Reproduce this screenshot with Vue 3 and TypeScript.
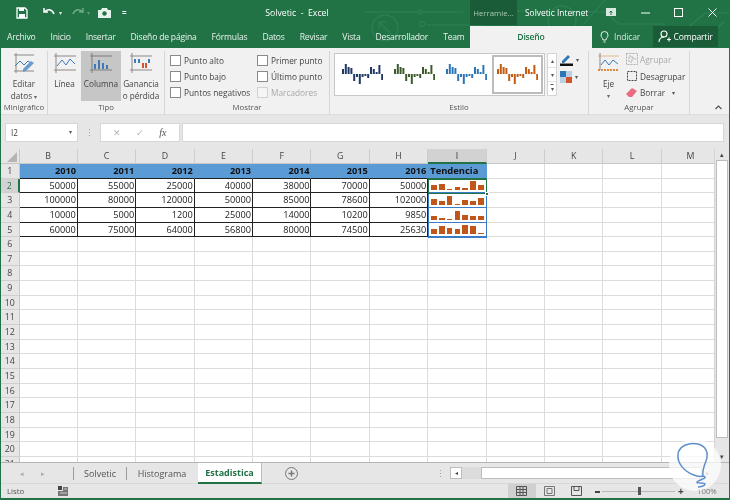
<script setup lang="ts">
const cols = ['B','C','D','E','F','G','H','I','J','K','L','M']
const years = [2010,2011,2012,2013,2014,2015,2016]
const data = [
  [50000,55000,25000,40000,38000,70000,50000],
  [100000,80000,120000,50000,85000,78600,102000],
  [10000,5000,1200,25000,14000,10200,9850],
  [60000,75000,64000,56800,80000,74500,25630],
]
const rows = Array.from({length:21},(_,i)=>i+1)
function bars(r:number[]){
  const mn=Math.min(...r), mx=Math.max(...r)
  return r.map(v=>Math.max(1,(v-mn)/(mx-mn)*9))
}
const pattern=[5,10,7,6,-7,-3,-10,-3,-2,-4,7,5,2,9,-6]
const styles=['#1f3864','#3f5a2b','#2e75b6','#c55a11']
</script>

<template>
  <div class="app">
    <div class="top">
      <svg class="circuit" width="365" height="48" viewBox="0 0 365 48" fill="none" stroke="#2e8057" stroke-width="1.100">
        <path d="M0 12H52M55 12h4M58 12h40M62 25H120M120 25l14-14h24M172 12h12M210 12h30l14 12H300M300 47l40-34h25M330 47l30-26M240 0l-22 25"/>
        <circle cx="20" cy="28" r="13"/><circle cx="197" cy="20" r="14"/><circle cx="57" cy="24" r="2.500"/><circle cx="55" cy="12" r="2"/>
        <path d="M26 34 14 22M14 29v-7h7"/>
      </svg>
      <header class="title">
        <div class="qat">
          <svg width="12" height="12" viewBox="0 0 12 12"><path d="M1 1h8l2 2v8H1z" fill="none" stroke="#fff" stroke-width="1.300"/><path d="M3 1h5v3H3zM3 7h6v4H3z" fill="#fff"/></svg>
          <svg width="13" height="11" viewBox="0 0 13 11" fill="none" stroke="#fff" stroke-width="1.500"><path d="M1 1v4h4M1.500 5C4 1.500 9 2 11 7"/></svg>
          <span class="tiny">▾</span>
          <svg class="dim" width="13" height="11" viewBox="0 0 13 11" fill="none" stroke="#6fa988" stroke-width="1.500"><path d="M12 1v4H8M11.500 5C9 1.500 4 2 2 7"/></svg>
          <span class="tiny dimt">▾</span>
          <svg class="cam" width="13" height="10" viewBox="0 0 13 10"><path d="M0 2h3l1-2h5l1 2h3v8H0z" fill="#e8f2ec"/><circle cx="6.500" cy="5.500" r="2.200" fill="#217346"/></svg>
          <span class="custom">=</span>
        </div>
        <div class="doc">Solvetic&nbsp; -&nbsp; Excel</div>
        <div class="tool">Herramie...</div>
        <div class="user">Solvetic Internet</div>
        <div class="winbtns">
          <svg width="10" height="9" viewBox="0 0 10 9"><path d="M0 0h10v8H0z" fill="#d9e8df"/><path d="M5 7V3M3.500 4.500 5 3l1.500 1.500" stroke="#217346" fill="none"/></svg>
          <svg width="9" height="9" viewBox="0 0 9 9"><path d="M0 5h9" stroke="#fff"/></svg>
          <svg width="9" height="9" viewBox="0 0 9 9"><rect x=".5" y=".5" width="8" height="8" fill="none" stroke="#fff"/></svg>
          <svg width="9" height="9" viewBox="0 0 9 9"><path d="m.5.500 8 8m0-8-8 8" stroke="#fff"/></svg>
        </div>
      </header>

      <nav class="tabs">
        <span>Archivo</span><span>Inicio</span><span>Insertar</span><span>Diseño de página</span><span>Fórmulas</span><span>Datos</span><span>Revisar</span><span>Vista</span><span>Desarrollador</span><span>Team</span>
        <b class="active">Diseño</b>
        <span class="tell">
          <svg width="9" height="12" viewBox="0 0 9 12" fill="none" stroke="#e6f0ea"><path d="M3 9C3 7 1 6.500 1 4a3.500 3.500 0 0 1 7 0c0 2.500-2 3-2 5zM3.500 11h2"/></svg>
          Indicar
        </span>
        <span class="share">
          <svg width="13" height="13" viewBox="0 0 13 13" fill="none" stroke="#fff" stroke-width="1.100"><circle cx="6" cy="4" r="3"/><path d="M1 12c0-3 2-5 5-5M9 9.500h4M11 7.500v4"/></svg>
          Compartir
        </span>
      </nav>
    </div>

    <section class="ribbon">
      <div class="group g1">
        <div class="body big">
          <div class="bigbtn">
            <svg width="24" height="22" viewBox="0 0 24 22" fill="none"><path d="M2 2h20M2 18h20M4 0v20" stroke="#8a8a8a"/><path d="m3 13 5-5 4 4 4-4 4 3" stroke="#3d7ab8"/><path d="m11 16 8-8 3 2-8 8-3 1z" fill="#6a9bcc"/></svg>
            <span>Editar<br>datos <i>▾</i></span>
          </div>
        </div>
        <label>Minigráfico</label>
      </div>
      <div class="group g2">
        <div class="body big">
          <div class="bigbtn w1">
            <svg width="22" height="22" viewBox="0 0 22 22" fill="none"><path d="M0 3h22M0 17h22M2 0v20" stroke="#8a8a8a"/><path d="m3 13 5-6 4 5 4-6 5 5" stroke="#3d7ab8"/></svg>
            <span>Línea</span>
          </div>
          <div class="bigbtn w2 on">
            <svg width="22" height="22" viewBox="0 0 22 22" fill="none"><path d="M0 3h22M0 17h22M2 0v20" stroke="#7d7d7d"/><path d="M4 11h2v5H4zM8 7h2v9H8zM12 10h2v6h-2zM16 12h2v4h-2z" fill="#3d7ab8"/></svg>
            <span>Columna</span>
          </div>
          <div class="bigbtn w3">
            <svg width="22" height="22" viewBox="0 0 22 22" fill="none"><path d="M0 3h22M0 17h22M2 0v20" stroke="#8a8a8a"/><path d="M4 6h2v4H4zM8 6h2v4H8zM18 6h2v4h-2z" fill="#3d7ab8"/><path d="M12 10h2v5h-2zM15 10h2v5h-2z" fill="#d0552a"/></svg>
            <span>Ganancia<br>o pérdida</span>
          </div>
        </div>
        <label>Tipo</label>
      </div>
      <div class="group g3">
        <div class="body checks">
          <div class="checkcol c1">
            <div class="chk"><i></i>Punto alto</div>
            <div class="chk"><i></i>Punto bajo</div>
            <div class="chk"><i></i>Puntos negativos</div>
          </div>
          <div class="checkcol">
            <div class="chk"><i></i>Primer punto</div>
            <div class="chk"><i></i>Último punto</div>
            <div class="chk off"><i></i>Marcadores</div>
          </div>
        </div>
        <label>Mostrar</label>
      </div>
      <div class="group g4">
        <div class="body gal">
          <div class="gallery">
            <div v-for="(c,i) in styles" :key="c" class="item" :class="{sel:i===3}">
              <svg width="41" height="24" viewBox="0 0 41 24">
                <rect v-for="(p,j) in pattern" :key="j" :x="j*2.800" :y="p>0?11-p:11" width="2" :height="Math.abs(p)" :fill="c"/>
              </svg>
            </div>
          </div>
          <div class="spin"><span>▴</span><span>▾</span><span class="more">▾</span></div>
          <div class="pickers">
            <div class="pick">
              <svg width="13" height="13" viewBox="0 0 13 13"><path d="m2 8 6-6 2 2-6 6H2z" fill="#2e75b6"/><path d="M0 10.500h13V13H0z" fill="#111"/></svg><em>▾</em>
            </div>
            <div class="pick">
              <svg width="12" height="12" viewBox="0 0 12 12"><path d="M0 0h6v6H0z" fill="#2e75b6"/><path d="M6 6h6v6H6z" fill="#d0552a"/><path d="M6 0h6v6H6zM0 6h6v6H0z" fill="#b9cfe4"/></svg><em>▾</em>
            </div>
          </div>
        </div>
        <label>Estilo</label>
      </div>
      <div class="group g5">
        <div class="body axis">
          <div class="bigbtn eje">
            <svg width="23" height="22" viewBox="0 0 23 22" fill="none"><path d="M1 3h21" stroke="#e3b98e"/><path d="M1 17h21" stroke="#e08a3c" stroke-dasharray="2 1" stroke-width="2"/><path d="M3 0v17" stroke="#8a8a8a"/><path d="m4 12 4-5 4 5 4-5 5 4" stroke="#3d7ab8"/></svg>
            <span>Eje<br><i>▾</i></span>
          </div>
          <div class="acts">
            <div class="act off"><svg width="12" height="12" viewBox="0 0 12 12" fill="none" stroke="#b0b0b0" stroke-dasharray="2 1"><rect x=".5" y=".5" width="11" height="11"/><path d="M3 3h3v6H3zM6 5h3v3"/></svg>Agrupar</div>
            <div class="act"><svg width="12" height="12" viewBox="0 0 12 12" fill="none" stroke="#444" stroke-dasharray="2 1"><rect x="1.500" y="1.500" width="9" height="9"/></svg>Desagrupar</div>
            <div class="act"><svg width="12" height="11" viewBox="0 0 12 11"><path d="m0 7 6-6 5 3-5 6H3z" fill="#ea6b82"/></svg>Borrar <em>▾</em></div>
          </div>
        </div>
        <label>Agrupar</label>
      </div>
      <div class="collapse">
        <svg width="7" height="5" viewBox="0 0 7 5" fill="none" stroke="#555" stroke-width="1.200"><path d="m.5 4 3-3 3 3"/></svg>
      </div>
    </section>

    <section class="formula">
      <div class="namebox">I2<em>▾</em></div>
      <div class="dots">⋮</div>
      <div class="fxbox"><span>✕</span><span>✓</span><i>fx</i></div>
      <div class="input"></div>
    </section>

    <section class="sheet">
      <div class="gridwrap">
        <div class="grid">
          <div class="corner"><svg width="10" height="10" viewBox="0 0 10 10"><path d="M10 0v10H0z" fill="#b5b5b5"/></svg></div>
          <div v-for="c in cols" :key="c" class="colh" :class="{cur:c==='I'}">{{ c }}</div>
          <template v-for="r in rows" :key="r">
            <div class="rowh" :class="{cur:r===2}">{{ r }}</div>
            <template v-for="(c,ci) in cols" :key="c">
              <div v-if="r===1 && ci<7" class="cell hd">{{ years[ci] }}</div>
              <div v-else-if="r===1 && ci===7" class="cell hd tend">Tendencia</div>
              <div v-else-if="r>=2 && r<=5 && ci<7" class="cell num" :class="{left:ci===0}">{{ data[r-2][ci] }}</div>
              <div v-else-if="r>=2 && r<=5 && ci===7" class="cell spark">
                <span v-for="(h,k) in bars(data[r-2])" :key="k" :style="{height:h+'px'}"></span>
              </div>
              <div v-else class="cell"></div>
            </template>
          </template>
          <div class="selblue"></div>
          <div class="selgreen"></div>
        </div>
      </div>
      <div class="vscroll">
        <span class="arrow">▴</span>
        <div class="thumb"></div>
        <span class="arrow">▾</span>
      </div>
    </section>

    <section class="sheettabs">
      <span class="nav">◂</span><span class="nav n2">▸</span>
      <span class="sep s0"></span><span class="st">Solvetic</span><span class="sep"></span><span class="st">Histograma</span>
      <b class="cur">Estadistica</b>
      <svg class="add" width="13" height="13" viewBox="0 0 13 13" fill="none" stroke="#777"><circle cx="6.500" cy="6.500" r="6"/><path d="M3.500 6.500h6M6.500 3.500v6" stroke-width="1.400"/></svg>
      <span class="grip">⋮</span>
      <div class="hscroll">
        <span class="hbtn">◂</span><span class="htrack"></span><span class="hthumb"></span><span class="hend">▸</span>
      </div>
    </section>

    <footer class="status">
      <span class="ready">Listo</span>
      <svg class="macro" width="10" height="10" viewBox="0 0 10 10"><path d="M0 0h4v4H0z" fill="#444"/><path d="M5 1h5v9H0V5h5z" fill="#777"/><path d="M6 3h3M2 7h7" stroke="#eee" stroke-width=".7"/></svg>
      <div class="views">
        <span class="v on"><svg width="11" height="10" viewBox="0 0 11 10" fill="none" stroke="#555"><path d="M.5.500h10v9H.500zM.5 3.500h10M.5 6.500h10M4 .5v9M7 .5v9"/></svg></span>
        <span class="v"><svg width="11" height="10" viewBox="0 0 11 10" fill="none" stroke="#777"><path d="M.5.500h10v9H.500zM3 2.500h5v5H3z"/></svg></span>
        <span class="v"><svg width="11" height="10" viewBox="0 0 11 10" fill="none" stroke="#555"><path d="M.5.500h10v9H.500zM3 .5v4h5v-4"/></svg></span>
      </div>
      <span class="minus"></span>
      <div class="slider"><i></i></div>
      <span class="plus">+</span>
      <span class="pct">100%</span>
    </footer>

    <div class="badge">
      <svg width="54" height="54" viewBox="0 0 54 54" fill="none">
        <circle cx="27" cy="27" r="26" fill="#fff" fill-opacity=".72"/>
        <path d="M26 37C17 34 9 26 10 16 11 8 21 4 30 6c8 2 11 9 8 17-2 5-4 10-3 15M26 37c5 3 10 0 11 2s-7 3-8 5 8 0 8 2-5 3-7 3" stroke="#5f8fc9" stroke-width="1.500"/>
      </svg>
    </div>
  </div>
</template>

<style>
html,body{margin:0;padding:0;background:#fff}
</style>

<style scoped>
.app{width:730px;height:500px;box-sizing:border-box;position:relative;overflow:hidden;background:#e6e6e6;font-family:"Open Sans","Liberation Sans",sans-serif;color:#444;display:flex;flex-direction:column;border:solid #217346;border-width:0 1px 2px 1px;filter:blur(.3px)}
.top{margin:0 -1px;background:#217346;position:relative;flex:none}
.title{height:25px;display:flex;align-items:center;color:#fff;position:relative;font-size:8.500px}
.circuit{position:absolute;left:365px;top:0;pointer-events:none}
.qat{display:flex;align-items:center;margin-left:16px;width:215px;flex:none}
.qat svg{flex:none}
.qat>svg:nth-child(2){margin-left:15px}
.tiny{font-size:6px;margin-left:3px;color:#d5e6dc}
.dimt{color:#5f9c7a}
.dim{margin-left:9px}
.cam{margin-left:8px}
.custom{margin-left:11px;font-size:8px;font-weight:700}
.doc{width:132px;font-size:8.700px;text-align:center;flex:none}
.tool{position:absolute;left:470px;top:0;width:47px;height:25px;background:#1a5c38;color:#a9c9b6;display:flex;align-items:center;justify-content:center;font-size:7.800px}
.user{position:absolute;left:525px;top:0;line-height:25px;font-size:8.400px}
.winbtns{position:absolute;left:606px;top:0;height:25px;width:111px;display:flex;align-items:center;justify-content:space-between}
.tabs{height:23px;display:flex;align-items:center;color:#e8f2ec;font-size:8.600px;letter-spacing:-.2px;padding-left:7px;position:relative;box-sizing:border-box}
.tabs>span{margin-right:15px;white-space:nowrap}
.tabs .active{position:absolute;left:470px;top:1px;width:122px;height:22px;background:#f1f1f1;color:#217346;display:flex;align-items:center;justify-content:center;font-weight:600;margin:0}
.tell{position:absolute;left:600px;top:0;height:23px;display:flex;align-items:center;gap:5px;color:#cfe2d6}
.share{position:absolute;left:653px;top:1px;width:65px;height:21px;background:#1a5c38;display:flex;align-items:center;justify-content:center;gap:2px;color:#fff;margin:0!important}
.ribbon{height:67px;margin:0 -1px;padding-left:1px;background:#f1f1f1;display:flex;position:relative;flex:none;border-bottom:1px solid #dcdcdc;box-sizing:border-box}
.group{display:flex;flex-direction:column;box-sizing:border-box;border-right:1px solid #d6d6d6;margin:3px 0 0;flex:none}
.group label{height:13px;line-height:12px;text-align:center;font-size:7.800px;color:#555;flex:none}
.body{flex:1;display:flex;min-height:0}
.g1{width:47px}.g2{width:117px}.g3{width:165px}.g4{width:259px}.g5{width:101px}
.bigbtn{display:flex;flex-direction:column;align-items:center;font-size:8.200px;line-height:11.500px;color:#444;text-align:center;padding-top:2px;box-sizing:border-box}
.bigbtn svg{margin-bottom:3px;flex:none}
.bigbtn i{font-style:normal;font-size:6px;color:#666}
.g1 .bigbtn{width:100%}
.w1{width:33px}.w2{width:40px}.w3{width:40px}
.on{background:#c6c6c6}
.checks{padding:1px 0 0 5px;gap:0}
.checkcol{display:flex;flex-direction:column;gap:0}
.c1{width:87px}
.chk{display:flex;align-items:center;font-size:8.300px;color:#444;height:17px;white-space:nowrap}
.chk i{width:9px;height:9px;border:1px solid #8a8a8a;background:#fff;margin-right:3px;flex:none}
.off{color:#a8a8a8}
.chk.off i{border-color:#d2d2d2;background:#f5f5f5}
.gal{padding:2px 0 0 4px;align-items:flex-start}
.gallery{width:211px;height:43px;border:1px solid #c8c8c8;box-sizing:border-box;background:#fff;display:flex;padding:1px}
.item{flex:1;display:flex;align-items:center;justify-content:center}
.item.sel{flex:none;width:51px;border:2px solid #bcbcbc;box-sizing:border-box}
.spin{width:10px;height:43px;margin-left:2px;display:flex;flex-direction:column;border:1px solid #d4d4d4;box-sizing:border-box;background:#fff}
.spin span{flex:1;display:flex;align-items:center;justify-content:center;font-size:6px;line-height:1;color:#555;border-bottom:1px solid #e2e2e2}
.spin .more{border:0;text-decoration:overline}
.pickers{margin-left:3px;display:flex;flex-direction:column;gap:4px}
.pick{display:flex;align-items:center;gap:3px;height:13px}
.pick em,.act em,.namebox em{font-style:normal;font-size:6px;color:#555}
.axis{padding-left:5px}
.eje{width:29px}
.eje svg{margin-bottom:3px}
.eje span{line-height:11px}
.acts{display:flex;flex-direction:column;margin-left:3px}
.act{display:flex;align-items:center;gap:2px;height:17px;font-size:8.300px;white-space:nowrap}
.act em{margin-left:5px}
.collapse{position:absolute;left:715px;top:56px;line-height:0}
.formula{height:34px;background:#e6e6e6;display:flex;align-items:center;padding:1px 0 1px 4px;flex:none;box-sizing:border-box}
.namebox{width:73px;height:19px;box-sizing:border-box;background:#fff;border:1px solid #d6d6d6;font-size:8.200px;display:flex;align-items:center;justify-content:space-between;padding:0 5px;color:#444}
.dots{width:22px;text-align:center;font-size:9px;color:#a0a0a0}
.fxbox{width:80px;height:19px;box-sizing:border-box;background:#fff;border:1px solid #d6d6d6;display:flex;align-items:center;justify-content:space-around;font-size:9px;color:#b5b5b5;padding:0 5px}
.fxbox i{color:#555;font-family:"Liberation Serif",serif;font-size:10px}
.input{width:542px;height:19px;margin-left:2px;box-sizing:border-box;background:#fff;border:1px solid #d6d6d6}
.sheet{height:314px;display:flex;flex:none;background:#fff;overflow:hidden;border-bottom:1px solid #b5b5b5;box-sizing:border-box}
.gridwrap{width:713px;overflow:hidden;flex:none}
.grid{display:grid;grid-template-columns:18.500px repeat(12,58.400px);grid-auto-rows:14.650px;grid-template-rows:15px;position:relative;width:720px;font-size:9.200px;color:#222}
.corner{background:#e6e6e6;display:flex;align-items:flex-end;justify-content:flex-end;padding:0 2px 1px 0;border-right:1px solid #c8c8c8;border-bottom:1px solid #c8c8c8;box-sizing:border-box}
.colh{background:#e6e6e6;border-right:1px solid #cdcdcd;border-bottom:1px solid #c8c8c8;box-sizing:border-box;text-align:center;line-height:15px;font-size:8.800px;color:#444}
.colh.cur{background:#d2d2d2;border-bottom:2px solid #217346;color:#333}
.rowh{background:#e6e6e6;border-right:1px solid #c8c8c8;border-bottom:1px solid #cfcfcf;box-sizing:border-box;text-align:center;line-height:14px;font-size:8.800px;color:#444}
.rowh.cur{background:#d2d2d2;color:#217346;border-right:2px solid #217346}
.cell{border-right:1px solid #e0dbdb;border-bottom:1px solid #e0dbdb;box-sizing:border-box;min-width:0;line-height:13.600px;white-space:nowrap}
.hd{background:#5b9bd5;font-weight:700;text-align:right;padding-right:1px;border-color:#5b9bd5;color:#111;border-bottom:1px solid #222}
.tend{text-align:left;padding-left:2px;font-size:9.400px;border-bottom-color:#217346}
.num{text-align:right;padding-right:1px;border-right:1px solid #222;border-bottom:1px solid #222;color:#222}
.spark{display:flex;align-items:flex-end;justify-content:space-between;padding:0 2px 2px 3px;border-color:#3a7cc9}
.spark span{width:5.500px;background:#c0561a;display:block}
.selblue{position:absolute;left:427.300px;top:29.650px;width:59px;height:59px;border:1px solid #3a7cc9;box-sizing:border-box;pointer-events:none}
.selgreen{position:absolute;left:427.300px;top:29.650px;width:59px;height:15px;border:1.500px solid #217346;box-sizing:border-box;pointer-events:none}
.selgreen::after{content:"";position:absolute;right:-3px;bottom:-3px;width:4px;height:4px;background:#217346;border:1px solid #fff;box-sizing:border-box}
.vscroll{flex:1;display:flex;flex-direction:column;background:#e6e6e6;align-items:center;padding:0 1px;border-left:1px solid #d4d4d4;box-sizing:border-box}
.arrow{height:11px;font-size:7px;line-height:11px;color:#444;flex:none}
.thumb{width:12px;height:278px;background:#fff;border:1px solid #bdbdbd;box-sizing:border-box;margin-bottom:auto}
.sheettabs{height:21px;display:flex;align-items:center;background:#e6e6e6;flex:none;font-size:9px;position:relative;box-sizing:border-box;border-bottom:1px solid #d8d8d8;color:#555}
.nav{position:absolute;left:19px;font-size:7px;color:#aaa}
.n2{left:40px}
.sep{width:1px;height:13px;background:#9a9a9a;flex:none}
.s0{margin-left:72px}
.st{width:52px;text-align:center;flex:none}
.st:nth-of-type(6){width:70px}
.sheettabs b{width:64px;height:21px;background:#fff;color:#217346;display:flex;align-items:center;justify-content:center;box-sizing:border-box;border-bottom:2px solid #217346;border-right:1px solid #bdbdbd;flex:none;align-self:flex-start;font-weight:700;margin-left:1px}
.add{margin-left:23px;flex:none}
.grip{position:absolute;left:435px;color:#a0a0a0;font-size:9px}
.hscroll{position:absolute;left:449px;top:4px;width:263px;height:12px;display:flex;align-items:stretch}
.hbtn{width:12px;background:#fff;border:1px solid #bdbdbd;box-sizing:border-box;font-size:6px;line-height:10px;text-align:center;color:#444;flex:none}
.htrack{width:19px;background:#dcdcdc;flex:none}
.hthumb{flex:1;background:#fff;border:1px solid #bdbdbd;box-sizing:border-box}
.hend{width:11px;font-size:6px;line-height:12px;text-align:center;color:#888;flex:none}
.status{height:14px;display:flex;align-items:center;background:#e6e6e6;flex:none;font-size:7.800px;position:relative;color:#555}
.ready{margin-left:6px;width:51px}
.macro{flex:none}
.views{position:absolute;left:507px;top:0;height:14px;display:flex}
.v{width:27.500px;height:14px;display:flex;align-items:center;justify-content:center}
.v.on{background:#d0d0d0}
.minus{position:absolute;left:594px;top:7px;width:5px;height:1.500px;background:#444}
.slider{position:absolute;left:601px;top:7px;width:73px;height:1px;background:#b9b9b9}
.slider i{position:absolute;left:36px;top:-4px;width:3px;height:8px;background:#555}
.plus{position:absolute;left:677px;top:0;font-size:10px;font-weight:700;line-height:14px;color:#444}
.pct{position:absolute;left:696px;top:0;line-height:14px;color:#777}
.badge{position:absolute;left:667px;top:438px;line-height:0;pointer-events:none}
</style>
